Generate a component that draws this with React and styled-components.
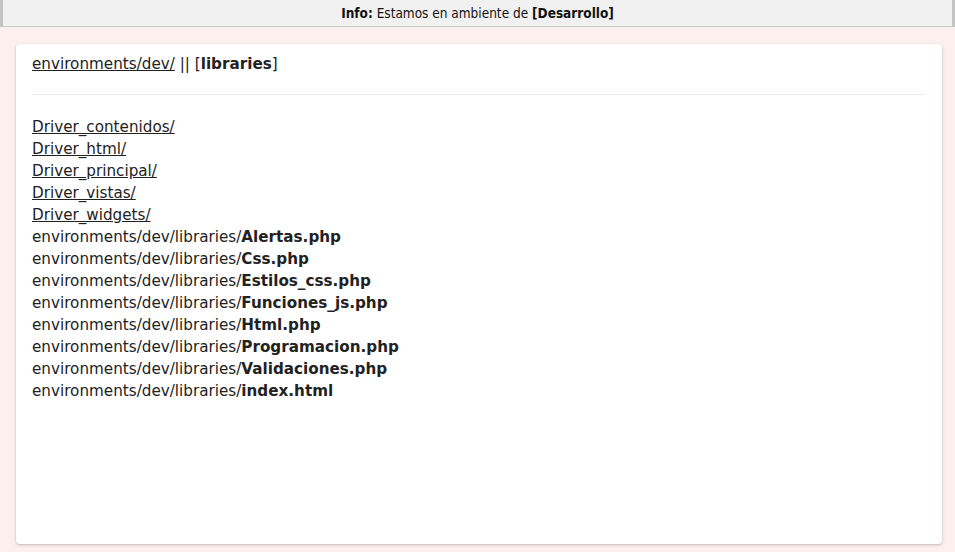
import styled, { createGlobalStyle } from "styled-components";
import React from "react";

const GlobalStyle = createGlobalStyle`
html, body {
  margin:0;
  padding:0;
  background:#fcf0ef;
}
body {
  font-family:"DejaVu Sans", Verdana, sans-serif;
  color:#222;
}
`;

const Page = styled.div`
display:flex;
flex-direction:column;
height:552px;
`;

const InfoBar = styled.div`
height:26px;
display:flex;
align-items:center;
justify-content:center;
background:#f1f1f1;
border-left:3px solid #c4c4c4;
border-right:3px solid #c4c4c4;
border-bottom:1px solid #c8c8c8;
font-family:"DejaVu Sans Condensed", "DejaVu Sans", sans-serif;
font-size:13.5px;
color:#111;
`;

const Content = styled.div`
flex:1;
padding:17px 13px 8px 16px;
display:flex;
`;

const Card = styled.div`
flex:1;
background:#fff;
border-radius:4px;
box-shadow:0 1px 3px rgba(0,0,0,0.25);
padding:9px 16px;
font-size:15.2px;
line-height:22px;
`;

const Crumbs = styled.div``;

const Link = styled.a`
color:#222;
text-decoration:underline;
`;

const Divider = styled.hr`
border:none;
border-top:1px solid #ececec;
margin:19px 0 21px;
`;

const List = styled.div`
display:flex;
flex-direction:column;
`;

const folders = ["Driver_contenidos/", "Driver_html/", "Driver_principal/", "Driver_vistas/", "Driver_widgets/"];
const files = ["Alertas.php", "Css.php", "Estilos_css.php", "Funciones_js.php", "Html.php", "Programacion.php", "Validaciones.php", "index.html"];

const App = () => {
    return (<>
        <GlobalStyle/>
        <Page>
            <InfoBar><b>Info:</b>&nbsp;Estamos en ambiente de&nbsp;<b>[Desarrollo]</b></InfoBar>
            <Content>
                <Card>
                    <Crumbs><Link href="#">environments/dev/</Link> || [<b>libraries</b>]</Crumbs>
                    <Divider/>
                    <List>
                        {folders.map((f)=>(
                            <div key={f}><Link href="#">{f}</Link></div>
                        ))}
                        {files.map((f)=>(
                            <div key={f}>environments/dev/libraries/<b>{f}</b></div>
                        ))}
                    </List>
                </Card>
            </Content>
        </Page>
    </>);
};
export default App;
